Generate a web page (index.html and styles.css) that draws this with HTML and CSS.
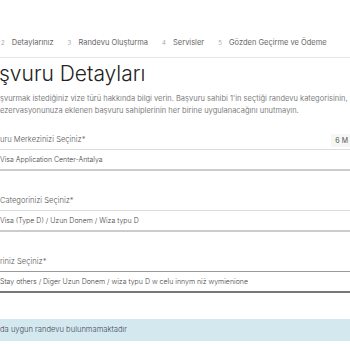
FILE: index.html
```html
<!DOCTYPE html>
<html lang="tr">
<head>
  <meta charset="UTF-8">
  <title>Başvuru Detayları</title>
  <link rel="stylesheet" href="styles.css">
</head>
<body>
  <div class="page">
    <div class="steps">
      <span class="step"><span class="num">2</span> Detaylarınız</span>
      <span class="step"><span class="num">3</span> Randevu Oluşturma</span>
      <span class="step"><span class="num">4</span> Servisler</span>
      <span class="step"><span class="num">5</span> Gözden Geçirme ve Ödeme</span>
    </div>

    <h1>şvuru Detayları</h1>
    <p class="intro">şvurmak istediğiniz vize türü hakkında bilgi verin. Başvuru sahibi 1'in seçtiği randevu kategorisinin,<br>ezervasyonunuza eklenen başvuru sahiplerinin her birine uygulanacağını unutmayın.</p>

    <div class="field">
      <div class="label-row">
        <label>uru Merkezinizi Seçiniz*</label>
        <span class="hint">6 M</span>
      </div>
      <div class="select">Visa Application Center-Antalya</div>
    </div>

    <div class="field">
      <div class="label-row">
        <label>Categorinizi Seçiniz*</label>
      </div>
      <div class="select">Visa (Type D) / Uzun Donem / Wiza typu D</div>
    </div>

    <div class="field">
      <div class="label-row">
        <label>riniz Seçiniz*</label>
      </div>
      <div class="select active">Stay others / Diger Uzun Donem / wiza typu D w celu innym niż wymienione</div>
    </div>

    <div class="alert">da uygun randevu bulunmamaktadır</div>
  </div>
</body>
</html>
```

FILE: styles.css
```css
body {
  margin: 0;
  background: #fff;
  font-family: 'Inter', 'Liberation Sans', sans-serif;
  color: #444;
  overflow: hidden;
}

.page {
  width: 350px;
}

.steps {
  display: flex;
  gap: 14px;
  padding: 38px 0 9px 1px;
  border-bottom: 1px solid #e6e6e6;
  font-size: 7.5px;
  line-height: 10px;
  color: #666;
  white-space: nowrap;
}

.step .num {
  font-size: 6px;
  color: #aaa;
  margin-right: 5px;
}

h1 {
  margin: 3px 0 0 -1px;
  font-size: 21px;
  line-height: 26px;
  font-weight: 300;
  color: #222;
}

.intro {
  margin: 6px 0 0;
  font-size: 7.5px;
  line-height: 12px;
  color: #808080;
  white-space: nowrap;
}

.field {
  margin-top: 18px;
}

.field + .field {
  margin-top: 25px;
}

.label-row {
  display: flex;
  justify-content: space-between;
  align-items: center;
  height: 10px;
  margin-bottom: 4px;
}

label {
  font-size: 7.6px;
  line-height: 10px;
  font-weight: 300;
  color: #555;
}

.hint {
  font-size: 7px;
  line-height: 13px;
  padding: 0 2px 0 4px;
  background: #f6f6f6;
  color: #555;
}

.select {
  height: 19px;
  line-height: 19px;
  border-top: 1px solid #ddd;
  border-bottom: 2px solid #ccc;
  font-size: 7px;
  font-weight: 300;
  color: #444;
  white-space: nowrap;
  overflow: hidden;
}

.select.active {
  border-top-color: #999;
  border-bottom-color: #777;
}

.alert {
  margin-top: 26px;
  height: 22px;
  line-height: 22px;
  background: #d3e9ef;
  font-size: 7.6px;
  font-weight: 300;
  color: #445;
}
```
